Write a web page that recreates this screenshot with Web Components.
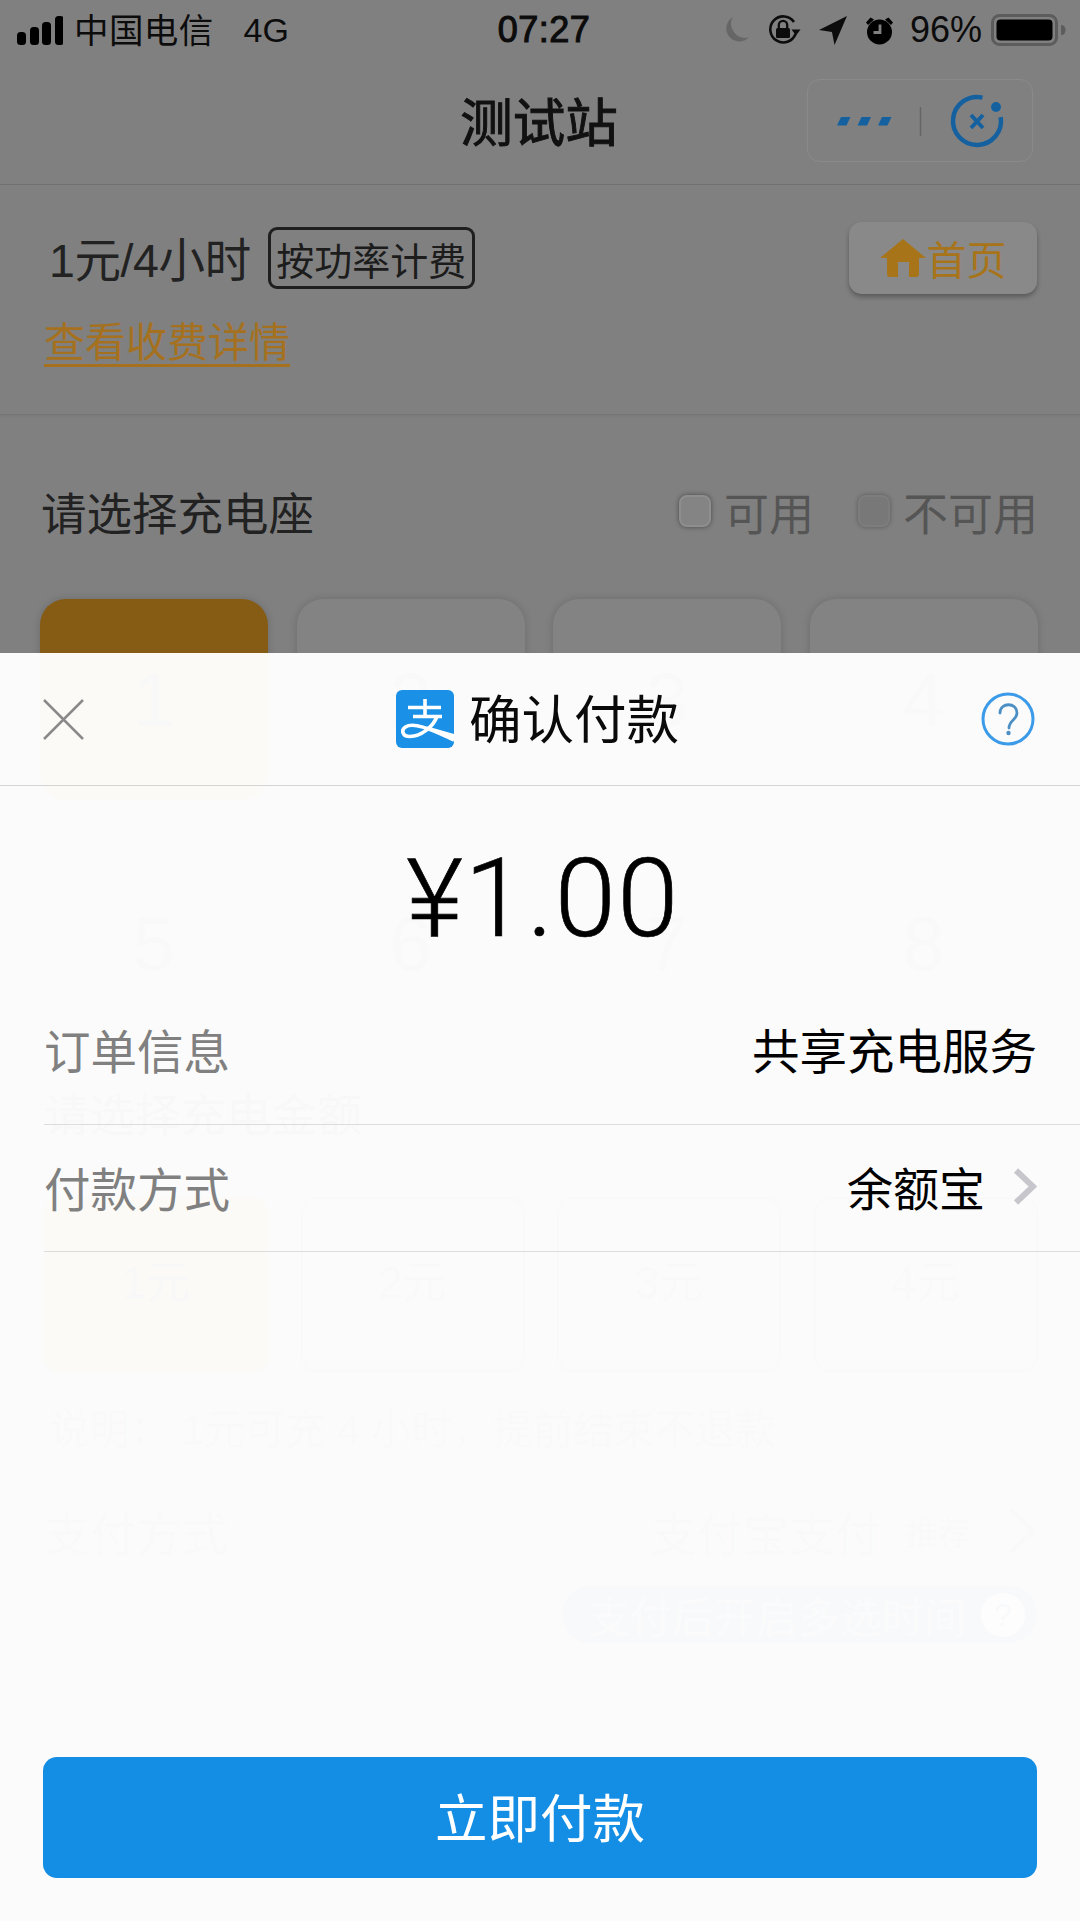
<!DOCTYPE html>
<html lang="zh-CN"><head><meta charset="utf-8"><title>测试站</title>
<style>
html,body{margin:0;padding:0;background:#808080}
body{font-family:"Liberation Sans","Noto Sans CJK SC",sans-serif;color:#222}
</style></head><body>
<charge-page>
  <status-bar></status-bar>
  <nav-bar>测试站</nav-bar>
  <tariff-panel></tariff-panel>
  <section-head style="margin-top:66px;padding-left:41px;padding-right:42px">请选择充电座<legend-keys slot="aside"></legend-keys></section-head>
  <seat-grid>
    <seat-card selected>1</seat-card><seat-card>2</seat-card><seat-card>3</seat-card><seat-card>4</seat-card>
    <seat-card>5</seat-card><seat-card>6</seat-card><seat-card>7</seat-card><seat-card>8</seat-card>
  </seat-grid>
  <section-head style="margin-top:38px;padding-left:44px">请选择充电金额</section-head>
  <amount-grid>
    <amount-card selected>1元</amount-card><amount-card>2元</amount-card><amount-card>3元</amount-card><amount-card>4元</amount-card>
  </amount-grid>
  <note-line>说明： 1元可充 4 小时，提前结束不退款</note-line>
  <pay-choice></pay-choice>
  <pay-modal>
    <pay-row label="订单信息" style="height:146px;padding-bottom:6px;font-size:47.500px">共享充电服务</pay-row>
    <pay-row label="付款方式" arrow style="height:127px">余额宝</pay-row>
  </pay-modal>
</charge-page>
<script>
function def(name, css, html){
  class El extends HTMLElement{
    constructor(){super();const s=this.attachShadow({mode:'open'});
      s.innerHTML='<style>'+css+'</style>'+(typeof html==='function'?html(this):html);}
  }
  customElements.define(name,El);
}

def('charge-page',`:host{display:block;position:relative;width:1080px;height:1921px;overflow:hidden;background:#808080;color:#222}`,`<slot></slot>`);

def('status-bar',`
:host{display:flex;align-items:center;height:60px;padding:0 14px 0 17px;box-sizing:border-box;color:#0c0c0c;font-size:34px;position:relative}
.l,.r{flex:1 1 0;display:flex;align-items:center}
.r{justify-content:flex-end}
.t{font-size:36px;letter-spacing:.5px;margin-left:5px;-webkit-text-stroke:1.100px #0c0c0c}
svg{display:block;flex:none}
.c{margin-left:11px;font-size:34.500px;letter-spacing:.4px;margin-bottom:4px}
.g{margin-left:30px;font-size:34px;margin-top:1px}
.pct{margin-left:16px;font-size:36px}
`,`
<div class="l">
<svg width="46" height="29" viewBox="0 0 46 29"><rect x="0" y="16" width="9" height="13" rx="3.500" fill="#000"/><rect x="13" y="11" width="9" height="18" rx="3.500" fill="#000"/><rect x="25" y="6" width="9" height="23" rx="3.500" fill="#000"/><rect x="38" y="0" width="9" height="29" rx="3.500" fill="#000"/></svg>
<span class="c">中国电信</span><span class="g">4G</span></div>
<div class="t">07:27</div>
<div class="r">
<svg width="28" height="26" viewBox="0 0 26 25"><path d="M10 0A12.600 12.600 0 1 0 25.500 19.500 A13.500 13.500 0 0 1 10 0Z" fill="#666"/></svg>
<svg style="margin-left:18px" width="33" height="30" viewBox="0 0 33 30" fill="none"><path d="M27.500 19A13 13 0 1 1 26 7" stroke="#0c0c0c" stroke-width="2.600"/><path d="M23.500 14.500h9l-4.500 6z" fill="#0c0c0c"/><rect x="8" y="13" width="14" height="10" rx="1.500" fill="#0c0c0c"/><path d="M10.800 13V10a4.200 4.200 0 0 1 8.400 0v3" stroke="#0c0c0c" stroke-width="2.300"/></svg>
<svg style="margin-left:18px" width="29" height="29" viewBox="0 0 28 28"><path d="M0 13.500L27 0 15 28 12.500 15.500Z" fill="#0c0c0c"/></svg>
<svg style="margin-left:17px" width="29" height="29" viewBox="0 0 29 29"><circle cx="14.500" cy="16" r="12.500" fill="#000"/><path d="M15 8.500V16.500H8.500" stroke="#808080" stroke-width="2.800" fill="none"/><path d="M1 6.500 5.500 1.500 9 3.500 3 9ZM28 6.500 23.500 1.500 20 3.500 26 9Z" fill="#000"/></svg>
<span class="pct">96%</span>
<svg style="margin-left:9px" width="75" height="32" viewBox="0 0 75 32"><rect x="1.500" y="1.500" width="64" height="29" rx="7" fill="none" stroke="#5c5c5c" stroke-width="3"/><rect x="5.500" y="5.500" width="56" height="21" rx="4" fill="#000"/><path d="M70 11c3 0 4.500 2 4.500 5s-1.500 5-4.500 5z" fill="#5c5c5c"/></svg>
</div>`);

def('nav-bar',`
:host{display:flex;align-items:center;justify-content:center;height:125px;box-sizing:border-box;border-bottom:1px solid #707070;position:relative;padding-bottom:7px;color:#111}
.t{font-size:52.500px;-webkit-text-stroke:1px #111;margin-left:-2px}
.cap{position:absolute;left:807px;top:19px;width:226px;height:83px;box-sizing:border-box;border:1px solid #8a8a8a;border-radius:13px;display:block}
svg{display:block}
`,`<span class="t"><slot></slot></span>
<div class="cap"><svg width="224" height="81" viewBox="0 0 224 81" fill="none">
<path d="M33 37h9.500l-4 8.500H29zM53.500 37h9.500l-4 8.500H49.500zM74 37h9.500l-4 8.500H70z" fill="#15619f"/>
<path d="M112.500 27v29" stroke="#666" stroke-width="1.500"/>
<path d="M174.500 17.600A24 24 0 1 0 192.700 37.200" stroke="#15619f" stroke-width="4.500" fill="none"/>
<circle cx="188" cy="27" r="5" fill="#15619f"/>
<path d="M163 35l12 13M175 35l-12 13" stroke="#15619f" stroke-width="4"/>
</svg></div>`);

def('tariff-panel',`
:host{display:block;height:230px;box-sizing:border-box;border-bottom:1px solid #757575;padding:37px 43px 0 44px;box-shadow:0 1px 4px rgba(0,0,0,.08)}
.top{display:flex;align-items:flex-start;justify-content:space-between;height:72px}
.left{display:flex;align-items:center;margin-top:5px;height:62px}
.price{font-size:46.500px;color:#222;margin-left:5px;letter-spacing:-.4px;margin-bottom:4px}
.tag{display:inline-flex;align-items:center;justify-content:center;margin-left:17px;width:207px;height:62px;box-sizing:border-box;border:3px solid #1f1f1f;border-radius:9px;font-size:38px;color:#1c1c1c}
.home{display:flex;align-items:center;justify-content:center;width:188px;height:72px;border-radius:13px;background:#898989;box-shadow:0 3px 5px rgba(0,0,0,.3);color:#a8741a;font-size:40px;gap:1px}
.link{display:block;margin-top:19px;font-size:41px;line-height:60px;color:#a5711f;text-decoration:underline;text-underline-offset:7px;text-decoration-thickness:3px}
svg{display:block}
`,`<div class="top"><div class="left"><span class="price">1元/4小时</span><span class="tag">按功率计费</span></div>
<div class="home"><svg width="46" height="38" viewBox="0 0 46 38"><path d="M23 0 46 19H39V35q0 3-3 3H29V23H18V38H10q-3 0-3-3V19H0Z" fill="#a8741a"/></svg><span>首页</span></div></div>
<a class="link">查看收费详情</a>`);

def('section-head',`
:host{display:flex;align-items:center;justify-content:space-between;height:60px;padding:0 44px 0 42px;font-size:45.500px;color:#222}
`,`<span><slot></slot></span><slot name="aside"></slot>`);

def('legend-keys',`
:host{display:flex;align-items:center;font-size:45px;color:#555}
.b{width:32px;height:32px;box-sizing:border-box;border-radius:8px;background:#848484;border:2px solid #8e8e8e;box-shadow:0 0 5px rgba(0,0,0,.45);margin-right:13px}
.b.off{background:#787878;border-color:#7d7d7d;margin-left:44px;box-shadow:0 0 5px rgba(0,0,0,.3)}
`,`<span class="b"></span><span>可用</span><span class="b off"></span><span>不可用</span>`);

def('seat-grid',`:host{display:grid;grid-template-columns:repeat(4,228px);grid-auto-rows:201px;column-gap:28.500px;row-gap:43px;margin:58px 0 0 40px}`,`<slot></slot>`);

def('seat-card',`
:host{display:flex;align-items:center;justify-content:center;border-radius:26px;background:#838383;box-shadow:0 0 9px rgba(0,0,0,.16);font-size:76px;color:#444}
:host([selected]){background:#865c14;color:#333}
`,`<slot></slot>`);

def('amount-grid',`:host{display:grid;grid-template-columns:repeat(4,224px);grid-auto-rows:175px;column-gap:32.500px;margin:55px 0 0 44px}`,`<slot></slot>`);

def('amount-card',`
:host{display:flex;align-items:center;justify-content:center;border-radius:16px;background:#808080;box-sizing:border-box;border:2px solid #555;font-size:44px;color:#555;padding-bottom:12px}
:host([selected]){background:#865c14;border-color:#865c14;color:#333}
`,`<slot></slot>`);

def('note-line',`:host{display:block;margin:30px 0 0 49px;height:56px;line-height:56px;font-size:40.500px;color:#555;white-space:nowrap}`,`<slot></slot>`);

def('pay-choice',`
:host{display:block;padding:0 43px 0 44px;margin-top:31px}
.row{display:flex;align-items:center;height:84px;font-size:46px;color:#555}
.v{margin-left:auto}
.s{font-size:32px;margin-left:25px;color:#664444}
svg{display:block;margin-left:37px}
.pill{display:flex;align-items:center;width:475px;height:57px;margin:13px 0 0 auto;box-sizing:border-box;padding:0 12px 0 26px;border-radius:29px;background:#1c3c6c;color:#8c8c8c;font-size:42px;white-space:nowrap;overflow:hidden}
.q{margin-left:auto;width:44px;height:44px;flex:none;border-radius:50%;background:#c0c0c0;color:#1c3c6c;font-size:32px;line-height:44px;text-align:center}
`,`<div class="row"><span>支付方式</span><span class="v">支付宝支付</span><span class="s">推荐</span>
<svg width="30" height="48" viewBox="0 0 30 48" fill="none"><path d="M4 3 26 24 4 45" stroke="#555" stroke-width="5"/></svg></div>
<div class="pill"><span>支付后开启多选时间</span><span class="q">?</span></div>`);

def('pay-modal',`
:host{position:absolute;left:0;right:0;top:653px;bottom:0;display:flex;flex-direction:column;background:rgba(255,255,255,.97);color:#000}
.head{display:flex;align-items:center;justify-content:space-between;height:133px;box-sizing:border-box;border-bottom:1px solid #d4d4d4;padding:0 45px 0 42px;flex:none}
.title{display:flex;align-items:center;gap:15px;font-size:52.500px;color:#0a0a0a;margin-left:9px}
.title span{margin-bottom:6px}
svg{display:block;flex:none}
.amount{flex:none;height:193px;box-sizing:border-box;padding:32px 0 0 6px;display:flex;align-items:center;justify-content:center;font-family:Roboto,"Liberation Sans",sans-serif;font-weight:300;font-size:110px;letter-spacing:1.500px;color:#000;-webkit-text-stroke:.7px #000}
.yen{font-size:110px;margin-right:0}
.btn{margin:auto 43px 43px;height:121px;flex:none;box-sizing:border-box;padding-bottom:6px;border-radius:14px;background:#148de4;color:#fff;display:flex;align-items:center;justify-content:center;font-size:52.500px}
`,`<div class="head">
<svg width="43" height="43" viewBox="0 0 43 43" fill="none"><path d="M2 2 41 41M41 2 2 41" stroke="#8a8a8a" stroke-width="2.500"/></svg>
<div class="title"><svg width="58" height="58" viewBox="0 0 58 58"><rect width="58" height="58" rx="6" fill="#1a90e6"/>
<path d="M12 17.500H45M17 26.500H46M29 9V26.500" stroke="#fff" stroke-width="3.600" fill="none"/>
<path d="M41 26.500C37 37 25 46.500 14 46.500C6 46.500 5 40 9.500 37C17 32 32 38 58 50" stroke="#fff" stroke-width="3.600" fill="none"/>
<path d="M30 36 58 44V51Z" fill="#fff"/></svg><span>确认付款</span></div>
<svg width="54" height="54" viewBox="0 0 54 54" fill="none"><circle cx="27" cy="27" r="25" stroke="#3c9be8" stroke-width="3"/><path d="M19 21c0-11 17-11 17 0 0 7-8 7-8 15" stroke="#4b8fc4" stroke-width="2.800" stroke-linecap="round"/><circle cx="27.500" cy="41" r="2.200" fill="#4b8fc4"/></svg>
</div>
<div class="amount"><span class="yen">¥</span><span>1.00</span></div>
<slot></slot>
<div class="btn">立即付款</div>`);

def('pay-row',`
:host{display:flex;align-items:center;flex:none;margin-left:44px;padding-right:43px;padding-bottom:4px;box-sizing:border-box;border-bottom:1px solid #dcdcdc;font-size:46px;color:#000}
.k{color:#808080;font-size:46.500px}
.v{margin-left:auto}
svg{display:none;margin-left:28px}
:host([arrow]) svg{display:block}
`,h=>`<span class="k">${h.getAttribute('label')}</span><span class="v"><slot></slot></span>
<svg width="24" height="37" viewBox="0 0 24 37" fill="none"><path d="M3 2.500 20 18.500 3 34.500" stroke="#c6c6cc" stroke-width="6"/></svg>`);
</script>
</body></html>
